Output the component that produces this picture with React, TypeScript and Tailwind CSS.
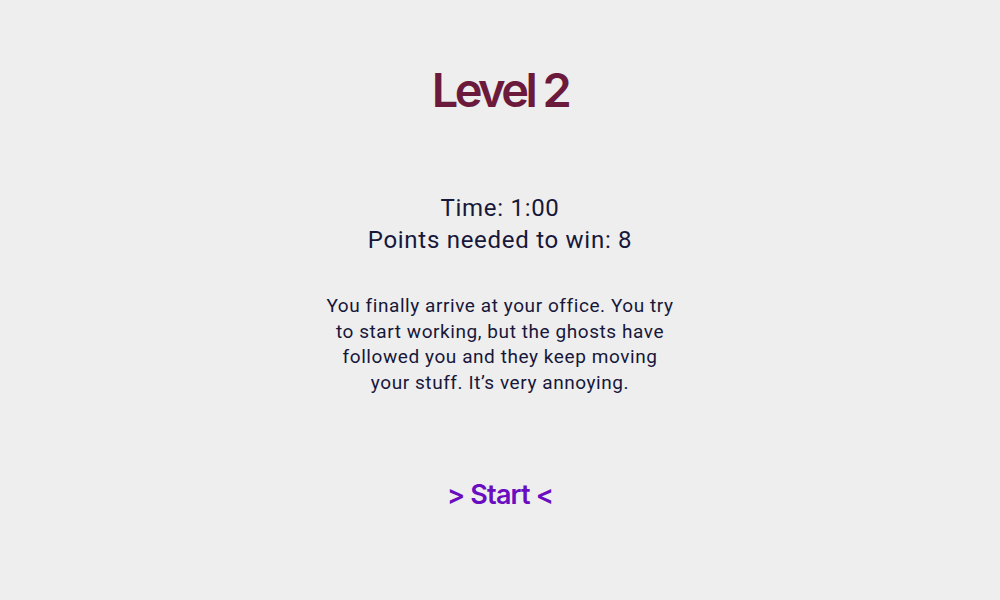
export default function App() {
  return (
    <div className="flex h-[600px] w-[1000px] flex-col items-center bg-[#eeeeee] pt-[66px] text-center font-['Roboto',sans-serif]">
      <h1 className="font-['Inter',sans-serif] text-[47px] leading-[48px] font-semibold tracking-[-0.075em] text-[#6c1a3c]">
        Level 2
      </h1>
      <div className="mt-[78px] text-[24px] leading-[32px] tracking-[0.03em] text-[#17173a]">
        <p>Time: 1:00</p>
        <p>Points needed to win: 8</p>
      </div>
      <p className="mt-[37px] w-[350px] text-[19px] leading-[25.7px] tracking-[0.03em] text-[#17173a]">
        You finally arrive at your office. You try to start working, but the ghosts have followed you and they keep moving your stuff. It’s very annoying.
      </p>
      <button className="mt-[81px] font-['Inter',sans-serif] text-[27px] leading-[36px] font-semibold tracking-[-0.03em] text-[#6a0cbf]">
        &gt; Start &lt;
      </button>
    </div>
  );
}
